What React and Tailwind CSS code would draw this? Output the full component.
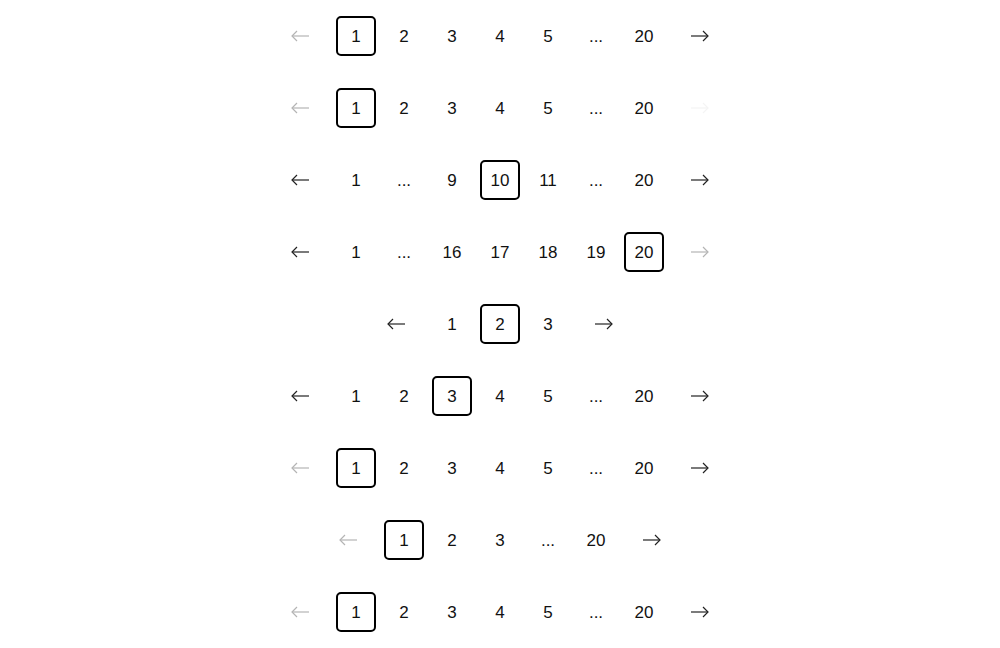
const rows = [
  { items: [1, 2, 3, 4, 5, "...", 20], active: 1, prev: "off", next: "on" },
  { items: [1, 2, 3, 4, 5, "...", 20], active: 1, prev: "off", next: "ghost" },
  { items: [1, "...", 9, 10, 11, "...", 20], active: 10, prev: "on", next: "on" },
  { items: [1, "...", 16, 17, 18, 19, 20], active: 20, prev: "on", next: "off" },
  { items: [1, 2, 3], active: 2, prev: "on", next: "on" },
  { items: [1, 2, 3, 4, 5, "...", 20], active: 3, prev: "on", next: "on" },
  { items: [1, 2, 3, 4, 5, "...", 20], active: 1, prev: "off", next: "on" },
  { items: [1, 2, 3, "...", 20], active: 1, prev: "off", next: "on" },
  { items: [1, 2, 3, 4, 5, "...", 20], active: 1, prev: "off", next: "on" },
];

const tone = {
  on: "text-[#222]",
  off: "text-[#b4b4b4]",
  ghost: "text-[#f4f4f4]",
};

function Arrow({ dir, state }) {
  return (
    <button className={`w-14 h-10 flex items-center justify-center ${tone[state]}`}>
      <svg width="20" height="14" viewBox="0 0 20 14" fill="none" stroke="currentColor" strokeWidth="1.2">
        {dir === "left" ? (
          <>
            <path d="M2 7H19" />
            <path d="M7 2L2 7L7 12" />
          </>
        ) : (
          <>
            <path d="M1 7H18" />
            <path d="M13 2L18 7L13 12" />
          </>
        )}
      </svg>
    </button>
  );
}

export default function App() {
  return (
    <div
      className="w-[1000px] h-[648px] bg-white flex flex-col items-center gap-8 pt-4 text-[#111]"
      style={{ fontFamily: "'Liberation Sans', Arial, sans-serif" }}
    >
      {rows.map((row, i) => (
        <div key={i} className="flex items-center gap-2">
          <Arrow dir="left" state={row.prev} />
          {row.items.map((it, j) => (
            <div
              key={j}
              className={`w-10 h-10 flex items-center justify-center text-[17px] pt-px ${
                it === row.active ? "border-2 border-black rounded-[5px]" : ""
              }`}
            >
              {it}
            </div>
          ))}
          <Arrow dir="right" state={row.next} />
        </div>
      ))}
    </div>
  );
}
